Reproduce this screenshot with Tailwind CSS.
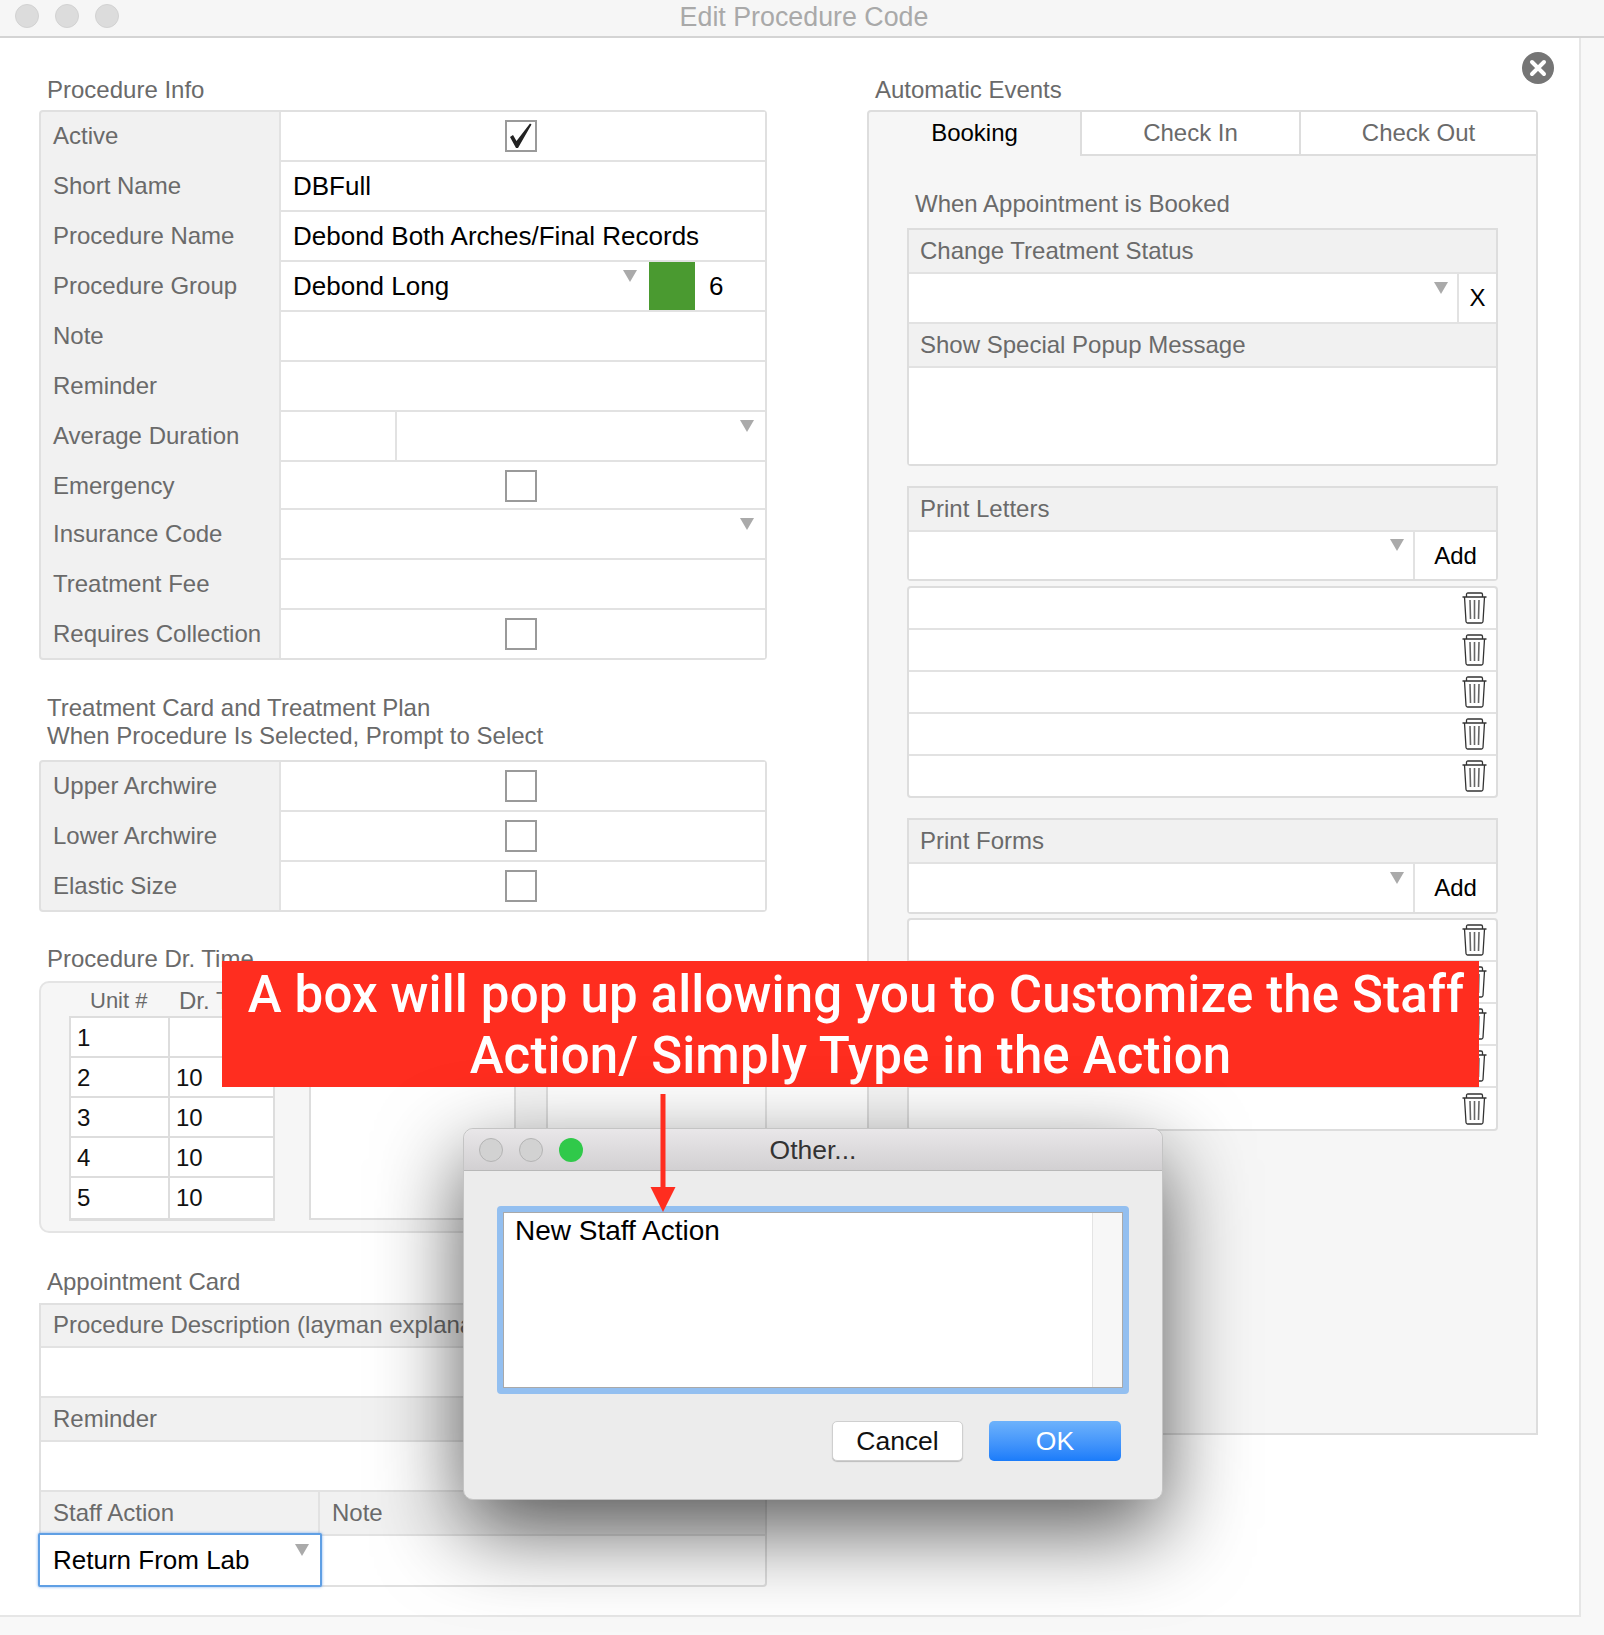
<!DOCTYPE html>
<html lang="en">
<head>
<title>Edit Procedure Code</title>
<meta charset="UTF-8">
<script src="https://cdn.jsdelivr.net/npm/@tailwindcss/browser@4"></script>
</head>
<body class="relative w-[1604px] h-[1635px] overflow-hidden bg-[#f8f8f8] font-['Liberation_Sans',Arial,sans-serif] text-[24px] leading-[28px] text-[#6a6a6a]">

<!-- title bar -->
<header class="relative flex items-center justify-center h-[38px] bg-[#f6f6f6] border-b-2 border-[#d4d4d4]">
  <div class="absolute left-[15px] top-[4px] flex gap-[16px]">
    <span class="w-[24px] h-[24px] rounded-full bg-[#dcdcdc] border border-[#d2d2d2]"></span>
    <span class="w-[24px] h-[24px] rounded-full bg-[#dcdcdc] border border-[#d2d2d2]"></span>
    <span class="w-[24px] h-[24px] rounded-full bg-[#dcdcdc] border border-[#d2d2d2]"></span>
  </div>
  <h1 class="pl-[4px] -mt-[2px] text-[26.8px] text-[#a9a9a9]">Edit Procedure Code</h1>
</header>

<!-- main window -->
<main class="flex w-[1581px] h-[1579px] pl-[39px] bg-white border-r-2 border-b-2 border-[#e6e6e6]">

  <!-- left column -->
  <section class="w-[728px] shrink-0">
    <h2 class="mt-[38px] mb-[6px] pl-[8px]">Procedure Info</h2>
    <div class="bg-[#f1f1f1] border-2 border-[#e0e0e0] rounded-[4px]">
      <div class="flex h-[50px]"><div class="w-[238px] pl-[12px] pb-[2px] flex items-center">Active</div>
        <div class="flex-1 flex items-center justify-center pr-[4px] bg-white border-l-2 border-b-2 border-[#e2e2e2]">
          <span class="block w-[32px] h-[32px] border-2 border-[#9a9a9a] bg-white">
            <svg viewBox="0 0 28 28" class="w-[28px] h-[28px]"><path d="M3 15 L6 13 L9.5 19 L23 1.5 L24.5 2.5 L11 26 L9 26 Z" fill="#222"/></svg>
          </span>
        </div>
      </div>
      <div class="flex h-[50px]"><div class="w-[238px] pl-[12px] pb-[2px] flex items-center">Short Name</div>
        <div class="flex-1 flex items-center pl-[12px] text-[26px] text-black bg-white border-l-2 border-b-2 border-[#e2e2e2]">DBFull</div></div>
      <div class="flex h-[50px]"><div class="w-[238px] pl-[12px] pb-[2px] flex items-center">Procedure Name</div>
        <div class="flex-1 flex items-center pl-[12px] text-[26px] text-black bg-white border-l-2 border-b-2 border-[#e2e2e2]">Debond Both Arches/Final Records</div></div>
      <div class="flex h-[50px]"><div class="w-[238px] pl-[12px] pb-[2px] flex items-center">Procedure Group</div>
        <div class="flex-1 flex items-stretch text-black bg-white border-l-2 border-b-2 border-[#e2e2e2]">
          <div class="w-[342px] flex items-center pl-[12px] text-[26px]">Debond Long</div>
          <span class="w-0 h-0 mt-[8px] border-x-[7px] border-x-transparent border-t-[12px] border-t-[#aaaaaa]"></span>
          <span class="w-[46px] ml-[12px] bg-[#4a9a30]"></span>
          <span class="flex items-center pl-[14px] text-[26px]">6</span>
        </div></div>
      <div class="flex h-[50px]"><div class="w-[238px] pl-[12px] pb-[2px] flex items-center">Note</div>
        <div class="flex-1 bg-white border-l-2 border-b-2 border-[#e2e2e2]"></div></div>
      <div class="flex h-[50px]"><div class="w-[238px] pl-[12px] pb-[2px] flex items-center">Reminder</div>
        <div class="flex-1 bg-white border-l-2 border-b-2 border-[#e2e2e2]"></div></div>
      <div class="flex h-[50px]"><div class="w-[238px] pl-[12px] pb-[2px] flex items-center">Average Duration</div>
        <div class="flex-1 flex justify-between pr-[11px] bg-white border-l-2 border-b-2 border-[#e2e2e2]">
          <span class="w-[116px] border-r-2 border-[#e2e2e2]"></span>
          <span class="w-0 h-0 mt-[8px] border-x-[7px] border-x-transparent border-t-[12px] border-t-[#aaaaaa]"></span>
        </div></div>
      <div class="flex h-[48px]"><div class="w-[238px] pl-[12px] flex items-center">Emergency</div>
        <div class="flex-1 flex items-center justify-center pr-[4px] bg-white border-l-2 border-b-2 border-[#e2e2e2]">
          <span class="block w-[32px] h-[32px] mt-[2px] border-2 border-[#9a9a9a] bg-white"></span></div></div>
      <div class="flex h-[50px]"><div class="w-[238px] pl-[12px] pb-[2px] flex items-center">Insurance Code</div>
        <div class="flex-1 flex justify-end pr-[11px] bg-white border-l-2 border-b-2 border-[#e2e2e2]">
          <span class="w-0 h-0 mt-[8px] border-x-[7px] border-x-transparent border-t-[12px] border-t-[#aaaaaa]"></span></div></div>
      <div class="flex h-[50px]"><div class="w-[238px] pl-[12px] pb-[2px] flex items-center">Treatment Fee</div>
        <div class="flex-1 bg-white border-l-2 border-b-2 border-[#e2e2e2]"></div></div>
      <div class="flex h-[48px]"><div class="w-[238px] pl-[12px] flex items-center">Requires Collection</div>
        <div class="flex-1 flex items-center justify-center pr-[4px] bg-white border-l-2 border-[#e2e2e2]">
          <span class="block w-[32px] h-[32px] border-2 border-[#9a9a9a] bg-white"></span></div></div>
    </div>

    <h2 class="mt-[34px] mb-[10px] pl-[8px]">Treatment Card and Treatment Plan<br>When Procedure Is Selected, Prompt to Select</h2>
    <div class="bg-[#f1f1f1] border-2 border-[#e0e0e0] rounded-[4px]">
      <div class="flex h-[50px]"><div class="w-[238px] pl-[12px] pb-[2px] flex items-center">Upper Archwire</div>
        <div class="flex-1 flex items-center justify-center pr-[4px] bg-white border-l-2 border-b-2 border-[#e2e2e2]">
          <span class="block w-[32px] h-[32px] border-2 border-[#9a9a9a] bg-white"></span></div></div>
      <div class="flex h-[50px]"><div class="w-[238px] pl-[12px] pb-[2px] flex items-center">Lower Archwire</div>
        <div class="flex-1 flex items-center justify-center pr-[4px] bg-white border-l-2 border-b-2 border-[#e2e2e2]">
          <span class="block w-[32px] h-[32px] border-2 border-[#9a9a9a] bg-white"></span></div></div>
      <div class="flex h-[48px]"><div class="w-[238px] pl-[12px] flex items-center">Elastic Size</div>
        <div class="flex-1 flex items-center justify-center pr-[4px] bg-white border-l-2 border-[#e2e2e2]">
          <span class="block w-[32px] h-[32px] border-2 border-[#9a9a9a] bg-white"></span></div></div>
    </div>

    <h2 class="mt-[33px] mb-[8px] pl-[8px]">Procedure Dr. Time</h2>
    <div class="flex h-[252px] pl-[28px] bg-[#f6f6f6] border-2 border-[#e4e4e4] rounded-[10px]">
      <div class="w-[206px] shrink-0">
        <div class="flex h-[33px] items-center pt-[2px] text-[22px]"><span class="w-[110px] pl-[21px]">Unit #</span><span class="text-[24px]">Dr. Time</span></div>
        <div class="border-2 border-[#dddddd] border-b-[3px] text-[#111]">
          <div class="flex h-[40px] bg-white border-b-2 border-[#dddddd]"><span class="w-[99px] pl-[6px] pt-[2px] flex items-center border-r-2 border-[#dddddd]">1</span><span class="flex-1"></span></div>
          <div class="flex h-[40px] bg-white border-b-2 border-[#dddddd]"><span class="w-[99px] pl-[6px] pt-[2px] flex items-center border-r-2 border-[#dddddd]">2</span><span class="flex-1 pl-[6px] pt-[2px] flex items-center">10</span></div>
          <div class="flex h-[40px] bg-white border-b-2 border-[#dddddd]"><span class="w-[99px] pl-[6px] pt-[2px] flex items-center border-r-2 border-[#dddddd]">3</span><span class="flex-1 pl-[6px] pt-[2px] flex items-center">10</span></div>
          <div class="flex h-[40px] bg-white border-b-2 border-[#dddddd]"><span class="w-[99px] pl-[6px] pt-[2px] flex items-center border-r-2 border-[#dddddd]">4</span><span class="flex-1 pl-[6px] pt-[2px] flex items-center">10</span></div>
          <div class="flex h-[40px] bg-white"><span class="w-[99px] pl-[6px] flex items-center border-r-2 border-[#dddddd]">5</span><span class="flex-1 pl-[6px] flex items-center">10</span></div>
        </div>
      </div>
      <div class="flex flex-1 h-[204px] mt-[33px] ml-[34px] border-2 border-r-0 border-[#dddddd] bg-white">
        <div class="w-[203px]"></div>
        <div class="w-[34px] bg-[#f6f6f6] border-x-2 border-[#dddddd]"></div>
        <div class="flex-1"></div>
      </div>
    </div>

    <h2 class="mt-[35px] mb-[7px] pl-[8px]">Appointment Card</h2>
    <div class="border-2 border-[#e0e0e0] rounded-b-[4px]">
      <div class="flex items-center h-[43px] pl-[12px] pb-[2px] bg-[#f1f1f1] border-b-2 border-[#e2e2e2] whitespace-nowrap">Procedure Description (layman explanation)</div>
      <div class="h-[50px] border-b-2 border-[#e2e2e2]"></div>
      <div class="flex items-center h-[44px] pl-[12px] pb-[1px] bg-[#f1f1f1] border-b-2 border-[#e2e2e2]">Reminder</div>
      <div class="h-[50px] border-b-2 border-[#e2e2e2]"></div>
      <div class="flex h-[44px] bg-[#f1f1f1] border-b-2 border-[#e2e2e2]">
        <span class="w-[279px] pl-[12px] pb-[1px] flex items-center border-r-2 border-[#e2e2e2]">Staff Action</span>
        <span class="pl-[12px] pb-[1px] flex items-center">Note</span>
      </div>
      <div class="flex h-[49px]">
        <div class="relative z-10 flex justify-between shrink-0 w-[284px] h-[54px] -ml-[3px] -mt-[3px] pl-[13px] pr-[11px] bg-white text-black border-2 border-[#5f9fe4] rounded-[2px] shadow-[0_0_3px_rgba(70,140,230,0.7)]">
          <span class="self-center text-[26px]">Return From Lab</span>
          <span class="w-0 h-0 mt-[9px] border-x-[7px] border-x-transparent border-t-[12px] border-t-[#aaaaaa]"></span>
        </div>
      </div>
    </div>
  </section>

  <!-- right column -->
  <section class="w-[671px] ml-[100px] shrink-0">
    <h2 class="mt-[38px] mb-[6px] pl-[8px]">Automatic Events</h2>
    <div class="h-[1325px] bg-[#f6f6f6] border-2 border-[#dddddd] rounded-t-[4px]">
      <div class="flex h-[44px] text-center leading-[42px]">
        <div class="w-[211px] text-black">Booking</div>
        <div class="w-[221px] bg-white border-x-2 border-b-2 border-[#dddddd]">Check In</div>
        <div class="flex-1 bg-white border-b-2 border-[#dddddd]">Check Out</div>
      </div>
      <div class="px-[38px]">
        <p class="mt-[34px] mb-[10px] pl-[8px]">When Appointment is Booked</p>

        <div class="border-2 border-[#dddddd] rounded-b-[4px]">
          <div class="flex items-center h-[44px] pl-[11px] pb-[1px] bg-[#f1f1f1] border-b-2 border-[#e2e2e2]">Change Treatment Status</div>
          <div class="flex h-[50px] bg-white border-b-2 border-[#e2e2e2]">
            <div class="flex-1 flex justify-end pr-[9px] border-r-2 border-[#e2e2e2]"><span class="w-0 h-0 mt-[8px] border-x-[7px] border-x-transparent border-t-[12px] border-t-[#aaaaaa]"></span></div>
            <div class="w-[37px] flex items-center justify-center text-black">X</div>
          </div>
          <div class="flex items-center h-[44px] pl-[11px] bg-[#f1f1f1] border-b-2 border-[#e2e2e2]">Show Special Popup Message</div>
          <div class="h-[96px] bg-white"></div>
        </div>

        <div class="mt-[20px] border-2 border-[#dddddd] rounded-b-[4px]">
          <div class="flex items-center h-[44px] pl-[11px] pb-[1px] bg-[#f1f1f1] border-b-2 border-[#e2e2e2]">Print Letters</div>
          <div class="flex h-[47px] bg-white">
            <div class="flex-1 flex justify-end pr-[9px] border-r-2 border-[#e2e2e2]"><span class="w-0 h-0 mt-[7px] border-x-[7px] border-x-transparent border-t-[12px] border-t-[#aaaaaa]"></span></div>
            <div class="w-[81px] flex items-center justify-center text-black">Add</div>
          </div>
        </div>
        <div class="mt-[5px] border-2 border-[#dddddd] rounded-[4px] bg-white">
          <div class="flex items-center justify-end h-[42px] pr-[9px] border-b-2 border-[#e2e2e2]">
            <svg viewBox="0 0 25 32" class="w-[25px] h-[32px]" fill="none" stroke="#333" stroke-width="1.3"><path d="M4.5 5V2.5Q4.5 1 6 1H19Q20.5 1 20.5 2.5V5M.5 5H24.5M2.5 5L4 29.5Q4.2 31 5.5 31H19.5Q20.8 31 21 29.5L22.5 5"/><path d="M8 8L8.5 27M12.5 8V27M17 8L16.5 27" stroke="#666" stroke-width="1.6"/></svg></div>
          <div class="flex items-center justify-end h-[42px] pr-[9px] border-b-2 border-[#e2e2e2]">
            <svg viewBox="0 0 25 32" class="w-[25px] h-[32px]" fill="none" stroke="#333" stroke-width="1.3"><path d="M4.5 5V2.5Q4.5 1 6 1H19Q20.5 1 20.5 2.5V5M.5 5H24.5M2.5 5L4 29.5Q4.2 31 5.5 31H19.5Q20.8 31 21 29.5L22.5 5"/><path d="M8 8L8.5 27M12.5 8V27M17 8L16.5 27" stroke="#666" stroke-width="1.6"/></svg></div>
          <div class="flex items-center justify-end h-[42px] pr-[9px] border-b-2 border-[#e2e2e2]">
            <svg viewBox="0 0 25 32" class="w-[25px] h-[32px]" fill="none" stroke="#333" stroke-width="1.3"><path d="M4.5 5V2.5Q4.5 1 6 1H19Q20.5 1 20.5 2.5V5M.5 5H24.5M2.5 5L4 29.5Q4.2 31 5.5 31H19.5Q20.8 31 21 29.5L22.5 5"/><path d="M8 8L8.5 27M12.5 8V27M17 8L16.5 27" stroke="#666" stroke-width="1.6"/></svg></div>
          <div class="flex items-center justify-end h-[42px] pr-[9px] border-b-2 border-[#e2e2e2]">
            <svg viewBox="0 0 25 32" class="w-[25px] h-[32px]" fill="none" stroke="#333" stroke-width="1.3"><path d="M4.5 5V2.5Q4.5 1 6 1H19Q20.5 1 20.5 2.5V5M.5 5H24.5M2.5 5L4 29.5Q4.2 31 5.5 31H19.5Q20.8 31 21 29.5L22.5 5"/><path d="M8 8L8.5 27M12.5 8V27M17 8L16.5 27" stroke="#666" stroke-width="1.6"/></svg></div>
          <div class="flex items-center justify-end h-[40px] pr-[9px]">
            <svg viewBox="0 0 25 32" class="w-[25px] h-[32px]" fill="none" stroke="#333" stroke-width="1.3"><path d="M4.5 5V2.5Q4.5 1 6 1H19Q20.5 1 20.5 2.5V5M.5 5H24.5M2.5 5L4 29.5Q4.2 31 5.5 31H19.5Q20.8 31 21 29.5L22.5 5"/><path d="M8 8L8.5 27M12.5 8V27M17 8L16.5 27" stroke="#666" stroke-width="1.6"/></svg></div>
        </div>

        <div class="mt-[20px] border-2 border-[#dddddd] rounded-b-[4px]">
          <div class="flex items-center h-[44px] pl-[11px] bg-[#f1f1f1] border-b-2 border-[#e2e2e2]">Print Forms</div>
          <div class="flex h-[48px] bg-white">
            <div class="flex-1 flex justify-end pr-[9px] border-r-2 border-[#e2e2e2]"><span class="w-0 h-0 mt-[8px] border-x-[7px] border-x-transparent border-t-[12px] border-t-[#aaaaaa]"></span></div>
            <div class="w-[81px] flex items-center justify-center text-black">Add</div>
          </div>
        </div>
        <div class="mt-[4px] border-2 border-[#dddddd] rounded-[4px] bg-white">
          <div class="flex items-center justify-end h-[42px] pr-[9px] border-b-2 border-[#e2e2e2]">
            <svg viewBox="0 0 25 32" class="w-[25px] h-[32px]" fill="none" stroke="#333" stroke-width="1.3"><path d="M4.5 5V2.5Q4.5 1 6 1H19Q20.5 1 20.5 2.5V5M.5 5H24.5M2.5 5L4 29.5Q4.2 31 5.5 31H19.5Q20.8 31 21 29.5L22.5 5"/><path d="M8 8L8.5 27M12.5 8V27M17 8L16.5 27" stroke="#666" stroke-width="1.6"/></svg></div>
          <div class="flex items-center justify-end h-[42px] pr-[9px] border-b-2 border-[#e2e2e2]">
            <svg viewBox="0 0 25 32" class="w-[25px] h-[32px]" fill="none" stroke="#333" stroke-width="1.3"><path d="M4.5 5V2.5Q4.5 1 6 1H19Q20.5 1 20.5 2.5V5M.5 5H24.5M2.5 5L4 29.5Q4.2 31 5.5 31H19.5Q20.8 31 21 29.5L22.5 5"/><path d="M8 8L8.5 27M12.5 8V27M17 8L16.5 27" stroke="#666" stroke-width="1.6"/></svg></div>
          <div class="flex items-center justify-end h-[42px] pr-[9px] border-b-2 border-[#e2e2e2]">
            <svg viewBox="0 0 25 32" class="w-[25px] h-[32px]" fill="none" stroke="#333" stroke-width="1.3"><path d="M4.5 5V2.5Q4.5 1 6 1H19Q20.5 1 20.5 2.5V5M.5 5H24.5M2.5 5L4 29.5Q4.2 31 5.5 31H19.5Q20.8 31 21 29.5L22.5 5"/><path d="M8 8L8.5 27M12.5 8V27M17 8L16.5 27" stroke="#666" stroke-width="1.6"/></svg></div>
          <div class="flex items-center justify-end h-[42px] pr-[9px] border-b-2 border-[#e2e2e2]">
            <svg viewBox="0 0 25 32" class="w-[25px] h-[32px]" fill="none" stroke="#333" stroke-width="1.3"><path d="M4.5 5V2.5Q4.5 1 6 1H19Q20.5 1 20.5 2.5V5M.5 5H24.5M2.5 5L4 29.5Q4.2 31 5.5 31H19.5Q20.8 31 21 29.5L22.5 5"/><path d="M8 8L8.5 27M12.5 8V27M17 8L16.5 27" stroke="#666" stroke-width="1.6"/></svg></div>
          <div class="flex items-center justify-end h-[41px] pr-[9px]">
            <svg viewBox="0 0 25 32" class="w-[25px] h-[32px]" fill="none" stroke="#333" stroke-width="1.3"><path d="M4.5 5V2.5Q4.5 1 6 1H19Q20.5 1 20.5 2.5V5M.5 5H24.5M2.5 5L4 29.5Q4.2 31 5.5 31H19.5Q20.8 31 21 29.5L22.5 5"/><path d="M8 8L8.5 27M12.5 8V27M17 8L16.5 27" stroke="#666" stroke-width="1.6"/></svg></div>
        </div>
      </div>
    </div>
  </section>
</main>

<!-- close button -->
<svg viewBox="0 0 32 32" class="absolute left-[1522px] top-[52px] w-[32px] h-[32px]">
  <circle cx="16" cy="16" r="16" fill="#757575"/>
  <path d="M10 10L22 22M22 10L10 22" stroke="#fff" stroke-width="4" stroke-linecap="round"/>
</svg>

<!-- red callout -->
<div class="absolute left-[222px] top-[961px] w-[1257px] h-[126px] pt-[4px] bg-[#ff2d1f] text-white text-center font-['Roboto',sans-serif] font-medium text-[51px] tracking-[0.15px] leading-[60.5px]">
  <span class="block pl-[11px]">A box will pop up allowing you to Customize the Staff</span>
  <span class="block">Action/ Simply Type in the Action</span>
</div>

<!-- dialog -->
<div class="absolute left-[463px] top-[1128px] w-[700px] h-[372px] flex flex-col rounded-[10px] bg-[#ececec] border border-[#c4c4c4] shadow-[0_30px_85px_rgba(0,0,0,0.65)]">
  <div class="relative flex items-center justify-center h-[42px] shrink-0 rounded-t-[10px] bg-gradient-to-b from-[#e9e7e9] to-[#d2d0d2] border-b border-[#b8b8b8]">
    <div class="absolute left-[15px] top-[9px] flex gap-[16px]">
      <span class="w-[24px] h-[24px] rounded-full bg-[#d2d2d2] border border-[#b4b4b4]"></span>
      <span class="w-[24px] h-[24px] rounded-full bg-[#d2d2d2] border border-[#b4b4b4]"></span>
      <span class="w-[24px] h-[24px] rounded-full bg-[#30c94a]"></span>
    </div>
    <span class="text-[26.5px] text-[#333]">Other...</span>
  </div>
  <div class="flex w-[632px] h-[188px] mt-[35px] ml-[33px] border-[6px] border-[#93bff0] rounded-[4px] bg-white">
    <div class="flex flex-1 border border-[#a9a9a9]">
      <div class="flex-1 pl-[11px] pt-[3px] text-[28px] leading-[30px] text-black">New Staff Action</div>
      <div class="w-[30px] bg-[#f7f7f7] border-l border-[#e4e4e4]"></div>
    </div>
  </div>
  <div class="flex justify-end gap-[26px] mt-[27px] pr-[41px] text-[26.5px]">
    <button class="w-[131px] h-[40px] rounded-[5px] bg-white text-[#111] border border-[#cfcfcf] shadow-[0_1px_1px_rgba(0,0,0,0.2)]">Cancel</button>
    <button class="w-[132px] h-[40px] rounded-[5px] bg-gradient-to-b from-[#6db2fb] to-[#1a7cfa] text-white">OK</button>
  </div>
</div>

<!-- arrow from the callout to the text box -->
<svg viewBox="0 0 26 118" class="absolute left-[650px] top-[1094px] w-[26px] h-[118px]">
  <path d="M10.5 0H15.5V93H25.5L13 118L.5 93H10.5Z" fill="#ff2d1f"/>
</svg>

</body>
</html>
